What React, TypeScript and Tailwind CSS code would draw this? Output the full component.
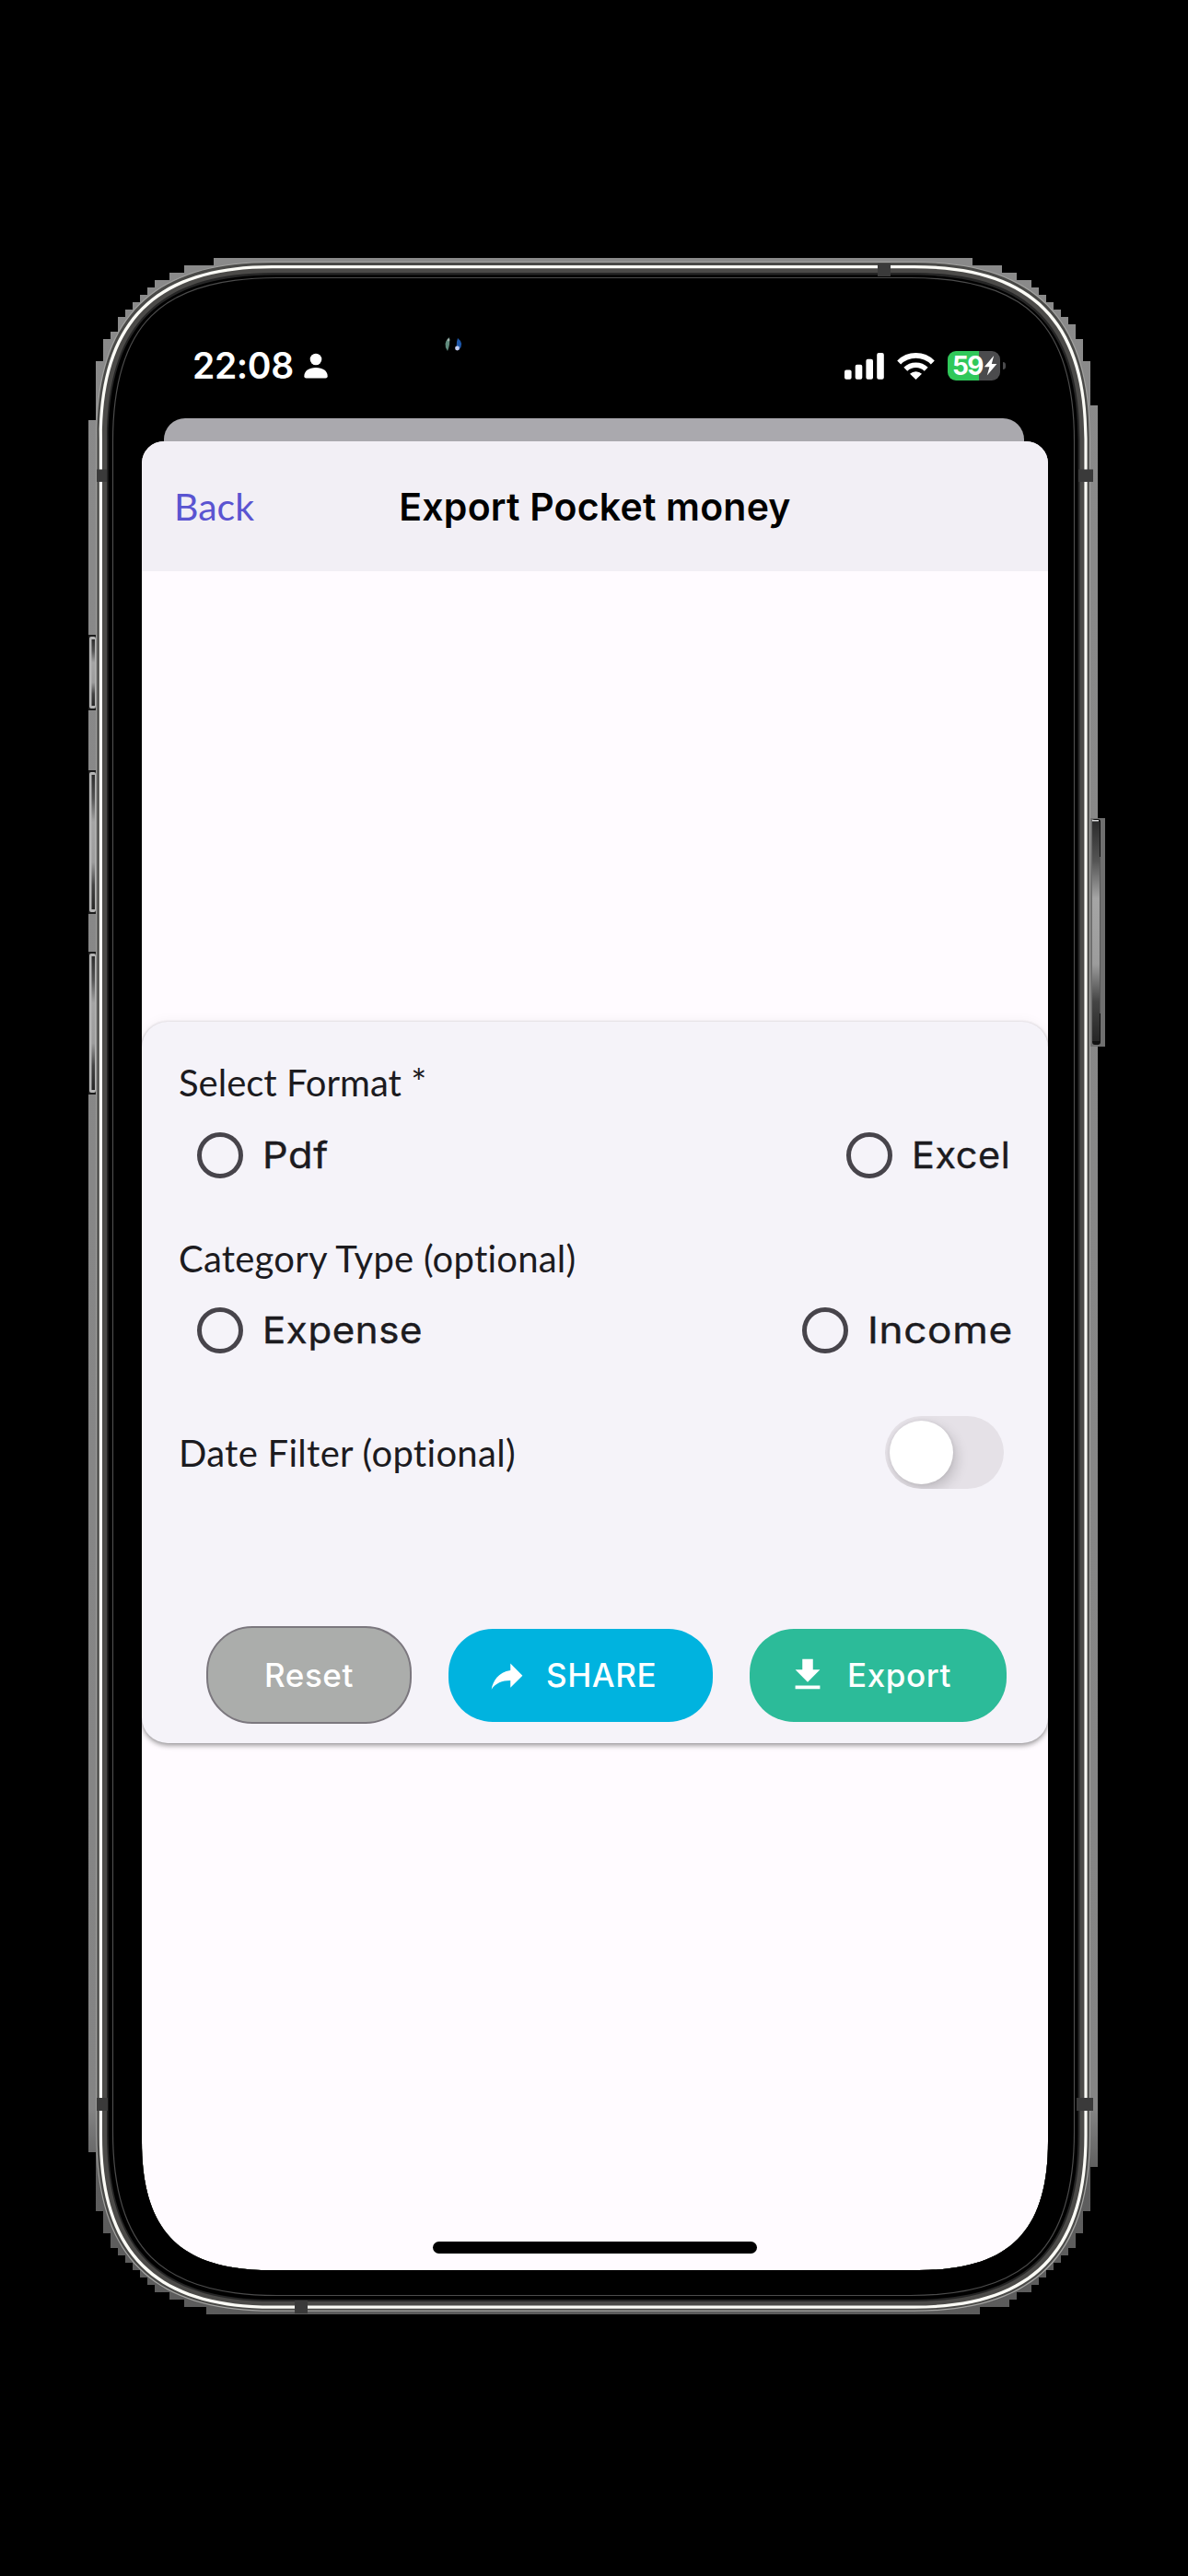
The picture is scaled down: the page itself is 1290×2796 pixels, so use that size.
import { useState } from "react";

/* Closed outline with smooth continuous corners, as used on the handset shell. */
function shell(x0: number, y0: number, x1: number, y1: number, r: number, k: number) {
  const c = r * (1 - k);
  return [
    `M${x0 + r} ${y0}H${x1 - r}`,
    `C${x1 - c} ${y0} ${x1} ${y0 + c} ${x1} ${y0 + r}`,
    `V${y1 - r}`,
    `C${x1} ${y1 - c} ${x1 - c} ${y1} ${x1 - r} ${y1}`,
    `H${x0 + r}`,
    `C${x0 + c} ${y1} ${x0} ${y1 - c} ${x0} ${y1 - r}`,
    `V${y0 + r}`,
    `C${x0} ${y0 + c} ${x0 + c} ${y0} ${x0 + r} ${y0}Z`,
  ].join("");
}

const DISPLAY_HOLE =
  "M180 360H1110V440H1138V2324C1138 2422 1096 2464 998 2464H294C196 2464 154 2422 154 2324V440H180Z";

const EDGE =
  "M96 456H104V392H112V368H120V360H128V344H136V336H144V328H152V320H160V312H168V304H184V296H200V288H232V280H1056V288H1088V296H1104V304H1120V312H1128V320H1136V328H1144V336H1152V344H1160V352H1168V368H1176V392H1184V440H1192V2352H1184V2400H1176V2424H1168V2440H1160V2448H1152V2456H1144V2464H1136V2472H1128V2480H1120V2488H1104V2496H1096V2504H1064V2512H224V2504H200V2496H184V2488H168V2480H160V2472H152V2464H144V2456H136V2448H128V2440H120V2424H112V2400H104V2336H96Z";

const LAYERS = [
  { d: shell(104.3, 284, 1184, 2508.8, 191, 0.685), fill: "#a3a3a1" },
  { d: shell(105.4, 285, 1182.8, 2507.6, 190, 0.685), fill: "#4a4a48" },
  { d: shell(107.8, 288, 1180.6, 2505.8, 188, 0.685), fill: "#fbfbf6" },
  { d: shell(111, 291.2, 1177.4, 2502.6, 185, 0.685), fill: "#4b4a48" },
  { d: shell(116, 296, 1172.5, 2498, 181, 0.69), fill: "#252525" },
  { d: shell(117.6, 298.6, 1170.5, 2496, 180, 0.695), fill: "#000000" },
];

const SIDE_BUTTONS = [
  { y: 690, h: 80 },
  { y: 837, h: 154 },
  { y: 1034, h: 153 },
];

function PhoneFrame() {
  return (
    <svg className="pointer-events-none absolute inset-0" width="1290" height="2796" viewBox="0 0 1290 2796" aria-hidden="true">
      <defs>
        <linearGradient id="edge" x1="0" y1="0" x2="0" y2="1">
          <stop offset="0" stopColor="#8a8a8a" />
          <stop offset="0.9" stopColor="#848484" />
          <stop offset="0.93" stopColor="#5e5e5e" />
          <stop offset="1" stopColor="#5c5c5c" />
        </linearGradient>
        <linearGradient id="key" x1="0" y1="0" x2="0" y2="1">
          <stop offset="0" stopColor="#2c2c2c" />
          <stop offset="0.18" stopColor="#555" />
          <stop offset="0.35" stopColor="#a5a5a5" />
          <stop offset="0.65" stopColor="#9c9c9c" />
          <stop offset="0.82" stopColor="#444" />
          <stop offset="1" stopColor="#262626" />
        </linearGradient>
      </defs>
      <path d={EDGE + DISPLAY_HOLE} fill="url(#edge)" fillRule="evenodd" />
      <rect x="1184" y="888" width="16" height="248" fill="#6f6f6f" />
      <rect x="1186" y="889" width="9" height="245" rx="3" fill="#111" />
      <rect x="1186" y="892" width="8" height="238" fill="url(#key)" />
      <rect x="1186" y="890" width="7" height="1.5" fill="#ddd" />
      <rect x="1194" y="930" width="1" height="170" fill="#555" />
      {SIDE_BUTTONS.map((b) => (
        <g key={b.y}>
          <rect x="96" y={b.y - 1} width="8" height={b.h + 2} fill="#1c1c1c" />
          <rect x="97" y={b.y + 1} width="7" height={b.h - 2} rx="2" fill="#b4b4b4" />
          <rect x="99.5" y={b.y + 4} width="3.5" height={b.h - 8} fill="url(#key)" />
        </g>
      ))}
      {LAYERS.map((l) => (
        <path key={l.d} d={l.d + DISPLAY_HOLE} fill={l.fill} fillRule="evenodd" />
      ))}
      <path d={shell(122.5, 301.5, 1166.5, 2491.5, 178, 0.71)} fill="none" stroke="#4c4c4c" strokeWidth="1.2" />
      <g fill="#3a3a3a">
        <rect x="105" y="509.5" width="11" height="13.5" />
        <rect x="1171" y="509.5" width="16" height="13.5" />
        <rect x="953" y="286" width="14" height="14" />
        <rect x="105" y="2277" width="12" height="14" />
        <rect x="1169" y="2277" width="18" height="14" />
        <rect x="320" y="2497" width="14" height="14" />
      </g>
      <g>
        <path d="M488 366Q480 373 486 381Q489 374 488 366Z" fill="#5f8a7c" />
        <path d="M497 367Q505 373 498 380Q494 376 497 367Z" fill="#1d56a8" />
        <circle cx="496.5" cy="378" r="2.4" fill="#c3cdf0" />
        <circle cx="487" cy="369" r="1.4" fill="#9fb0ab" />
      </g>
    </svg>
  );
}

function StatusBar() {
  return (
    <div className="flex h-[30px] items-center text-white">
      <span className="w-[110px] font-[Inter] text-[39px] leading-[30px] font-semibold tracking-[-0.4px]">22:08</span>
      <svg className="ml-[11px]" width="26" height="28" viewBox="0 0 26 28" fill="currentColor">
        <circle cx="13" cy="7" r="6.3" />
        <path d="M0.3 25.5C0.3 19.5 5.6 16 13 16S25.7 19.5 25.7 25.5Q25.7 27.5 23.5 27.5H2.5Q0.3 27.5 0.3 25.5Z" />
      </svg>
      <div className="ml-auto flex items-center">
        <svg width="43" height="30" viewBox="0 0 43 30" fill="currentColor">
          <rect x="0" y="19.5" width="7.6" height="10.3" rx="2" />
          <rect x="11.7" y="13.8" width="7.6" height="16" rx="2" />
          <rect x="23.4" y="7.8" width="7.6" height="22" rx="2" />
          <rect x="35.2" y="1" width="7.6" height="28.8" rx="2" />
        </svg>
        <svg className="ml-[14px]" width="41" height="30" viewBox="0 0 41 30">
          <g fill="none" stroke="currentColor" strokeWidth="5.6">
            <path d="M2.2 11.4A26 26 0 0 1 38.8 11.4" />
            <path d="M9.3 18.8A16 16 0 0 1 31.7 18.8" />
          </g>
          <path d="M20.5 30L14 23.8A9.4 9.4 0 0 1 27 23.8Z" fill="currentColor" />
        </svg>
        <div className="ml-[14px] flex h-8 w-[57px] items-center overflow-hidden rounded-[9px] bg-[linear-gradient(90deg,#30c85a_59%,#4b4b4d_59%)] pl-[5px]">
          <span className="w-[33px] font-[Inter] text-[28px] leading-8 font-bold tracking-[-1.6px]">59</span>
          <svg className="ml-px" width="15" height="22" viewBox="0 0 15 22" fill="currentColor">
            <path d="M11.2 0L0.8 12.2H6.4L3.8 21.4L14.4 9H8.8Z" />
          </svg>
        </div>
        <div className="ml-[3px] h-2 w-[3px] rounded-r-full bg-[#4b4b4d]" />
      </div>
    </div>
  );
}

type RadioProps = { label: string; checked: boolean; onSelect: () => void; textClass: string };

function Radio({ label, checked, onSelect, textClass }: RadioProps) {
  return (
    <button type="button" role="radio" aria-checked={checked} onClick={onSelect} className="flex h-[50px] items-center gap-[21px] text-left">
      <span className="flex size-[50px] items-center justify-center rounded-full border-[5px] border-[#47444b]">
        {checked && <span className="size-6 rounded-full bg-[#47444b]" />}
      </span>
      <span
        className={
          "origin-left font-[Inter] text-[39px] leading-[50px] font-normal tracking-[0.6px] whitespace-nowrap text-[#1c1b1f] [-webkit-text-stroke:0.4px_#1c1b1f] " +
          textClass
        }
      >
        {label}
      </span>
    </button>
  );
}

export default function App() {
  const [format, setFormat] = useState("");
  const [category, setCategory] = useState("");
  const [filter, setFilter] = useState(false);

  return (
    <main className="relative h-[2796px] w-[1290px] overflow-hidden bg-black pt-[382px] [font-variant-ligatures:none]">
      <div className="pr-[198px] pl-[209px]">
        <StatusBar />
      </div>

      <div className="mx-auto mt-[42px] h-[25px] w-[934px] rounded-t-[23px] bg-[#aaa9ae]" />

      <section className="ml-[154px] flex h-[1985px] w-[984px] flex-col overflow-hidden rounded-t-[24px] bg-[#fffbff]">
        <header className="grid h-[141px] shrink-0 grid-cols-[1fr_auto_1fr] items-center bg-[#f2eff5] px-[35px]">
          <button type="button" className="justify-self-start font-[Lato] text-[41px] leading-[48px] text-[#5a54d1]">Back</button>
          <h1 className="font-[Inter] text-[41px] leading-[48px] font-semibold tracking-[0.2px] text-black">Export Pocket money</h1>
        </header>

        <div className="mt-[489px] h-[783px] shrink-0 rounded-[28px] bg-[#f5f3f9] px-10 pt-[42px] shadow-[0_3px_5px_rgba(0,0,0,0.32),0_0_3px_rgba(0,0,0,0.12),0_0_14px_rgba(0,0,0,0.05)]">
          <h2 className="font-[Lato] text-[40px] leading-[48px] text-[#1c1b1f]">Select Format *</h2>
          <div className="mt-[30px] flex justify-between pl-5">
            <Radio label="Pdf" checked={format === "pdf"} onSelect={() => setFormat("pdf")} textClass="scale-x-[1.11]" />
            <Radio label="Excel" checked={format === "excel"} onSelect={() => setFormat("excel")} textClass="w-[108px] scale-x-[1.06]" />
          </div>

          <h2 className="mt-[63px] font-[Lato] text-[40px] leading-[48px] tracking-[0.23px] text-[#1c1b1f]">Category Type (optional)</h2>
          <div className="mt-[29px] flex justify-between pl-5">
            <Radio label="Expense" checked={category === "expense"} onSelect={() => setCategory("expense")} textClass="scale-x-[1.075]" />
            <Radio label="Income" checked={category === "income"} onSelect={() => setCategory("income")} textClass="w-[156px] scale-x-[1.13]" />
          </div>

          <div className="mt-[68px] flex h-[79px] items-center justify-between pr-[8px]">
            <h2 className="font-[Lato] text-[40px] leading-[48px] tracking-[0.3px] text-[#1c1b1f]">Date Filter (optional)</h2>
            <button
              type="button"
              role="switch"
              aria-checked={filter}
              onClick={() => setFilter(!filter)}
              className={"flex h-[79px] w-[129px] items-center overflow-hidden rounded-full p-[5px] " + (filter ? "justify-end bg-[#5a54d1]" : "bg-[#e5e1e7]")}
            >
              <span className="size-[69px] rounded-full bg-white shadow-[4px_6px_14px_rgba(0,0,0,0.16),0_0_4px_rgba(0,0,0,0.08)]" />
            </button>
          </div>

          <div className="mt-[149px] flex items-center pl-[30px] font-[Inter] text-[35px] leading-[48px] font-medium text-white">
            <button type="button" className="h-[106px] w-[223px] rounded-[50px] border-[2.5px] border-[#7b777e] bg-[#abadab] tracking-[0.6px]">Reset</button>
            <button type="button" className="ml-10 flex h-[101px] w-[287px] items-center rounded-[48px] bg-[#00b3df] pl-[41px] tracking-[0.6px]">
              <svg className="mt-1" width="45" height="45" viewBox="0 0 24 24" fill="currentColor">
                <path d="M21 11L14 4V8C7 9 4 14 3 19C5.5 15.5 9 13.9 14 13.9V18L21 11Z" />
              </svg>
              <span className="ml-5">SHARE</span>
            </button>
            <button type="button" className="ml-10 flex h-[101px] w-[279px] items-center rounded-[48px] bg-[#2cbb99] pl-10 tracking-[0.6px]">
              <svg width="46" height="46" viewBox="0 0 24 24" fill="currentColor">
                <path d="M5 20H19V18H5V20ZM19 9H15V3H9V9H5L12 16L19 9Z" />
              </svg>
              <span className="ml-5">Export</span>
            </button>
          </div>
        </div>

        <div className="mx-auto mt-auto mb-[18px] h-[13px] w-[352px] shrink-0 rounded-full bg-black" />
      </section>

      <PhoneFrame />
    </main>
  );
}
